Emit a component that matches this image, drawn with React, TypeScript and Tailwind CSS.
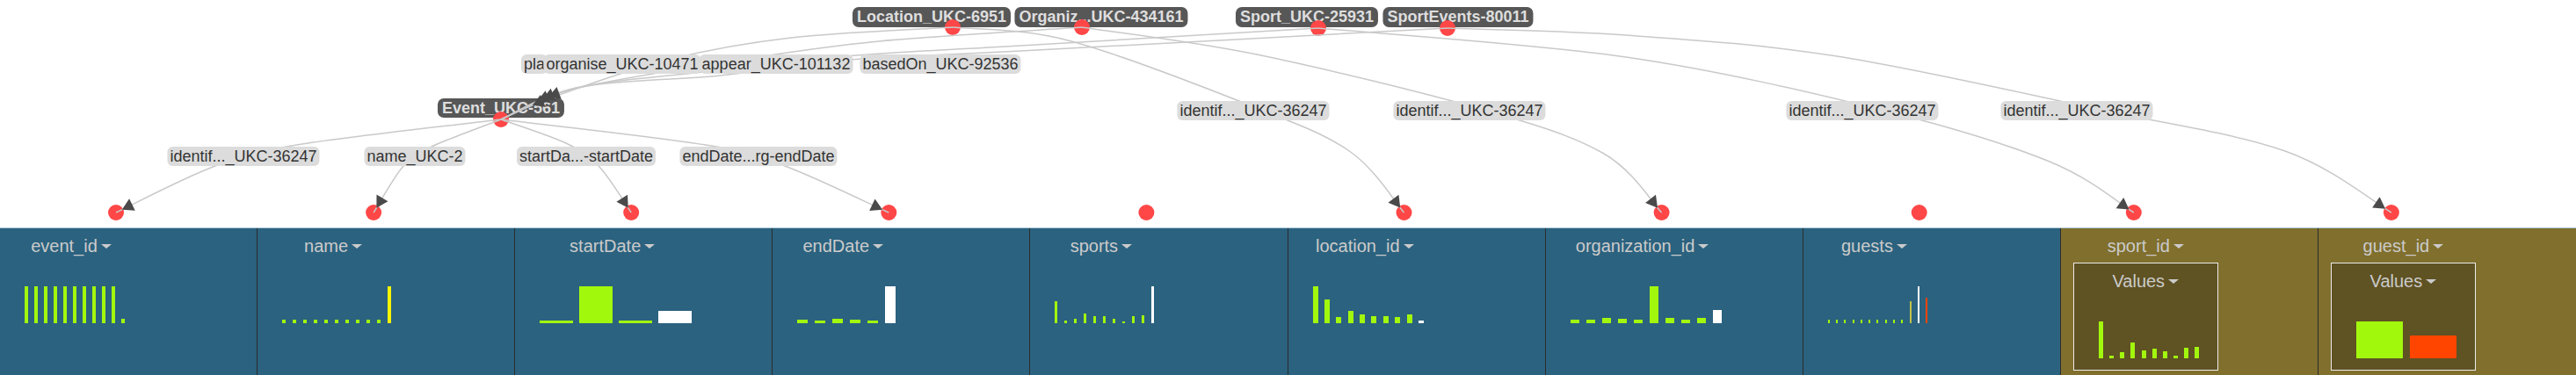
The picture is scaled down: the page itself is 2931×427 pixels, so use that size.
type Pt = [number, number];
type Bar = [number, string?];
type Chart = { w: number; gap: number; bars: Bar[] };
type Col = { name: string; chart: Chart; box?: boolean };

const GREEN = "#a2f80d";
const WHITE = "#ffffff";
const YELLOW = "#f6f600";
const RED = "#ff4500";
const KHAKI = "#c4c24a";

const g = (...hs: number[]): Bar[] => hs.map((h) => [h] as Bar);

const columns: Col[] = [
  { name: "event_id", chart: { w: 4, gap: 7, bars: g(42, 42, 42, 42, 42, 42, 42, 42, 42, 42, 5) } },
  { name: "name", chart: { w: 4, gap: 8, bars: [...g(4, 4, 4, 4, 4, 4, 4, 4, 4, 4), [42, YELLOW]] } },
  { name: "startDate", chart: { w: 38, gap: 7, bars: [...g(3, 42, 3), [14, WHITE]] } },
  { name: "endDate", chart: { w: 12, gap: 8, bars: [...g(4, 3, 5, 4, 3), [42, WHITE]] } },
  { name: "sports", chart: { w: 3, gap: 8, bars: [...g(25, 3, 5, 11, 8, 8, 5, 2, 8, 9), [42, WHITE]] } },
  { name: "location_id", chart: { w: 6, gap: 7.4, bars: [...g(42, 27, 7, 14, 10, 8, 8, 7, 10), [3, WHITE]] } },
  { name: "organization_id", chart: { w: 10, gap: 8, bars: [...g(4, 4, 6, 5, 4, 42, 6, 4, 6), [15, WHITE]] } },
  {
    name: "guests",
    chart: { w: 2, gap: 7.3, bars: [...g(4, 4, 4, 4, 4, 4, 4, 4, 4, 4), [25, KHAKI], [42, WHITE], [29, RED]] },
  },
  { name: "sport_id", box: true, chart: { w: 5, gap: 7.2, bars: g(42, 3, 7, 18, 9, 11, 8, 3, 12, 13) } },
  { name: "guest_id", box: true, chart: { w: 53, gap: 8, bars: [[42], [26, RED]] } },
];

// graph ------------------------------------------------------------------

const COL_W = 2931 / 10;
const bottomDots: Pt[] = columns.map((c, i) => [i * COL_W + (c.box ? 83 : 132), 242]);
const EVENT: Pt = [570, 136];
const LOC: Pt = [1084, 31];
const ORG: Pt = [1231, 31];
const SPORT: Pt = [1500, 32];
const SEVENTS: Pt = [1647, 32];

const edges: { pts: Pt[]; back: number }[] = [
  // into Event
  { pts: [LOC, [900, 43], [760, 68], [631, 110], EVENT], back: 38 },
  { pts: [ORG, [1000, 47], [830, 70], [650, 102], EVENT], back: 45 },
  { pts: [SPORT, [1161, 52], [975, 63], [800, 82], [655, 100], EVENT], back: 52 },
  { pts: [SEVENTS, [1161, 58], [967, 68], [820, 86], [662, 99], EVENT], back: 59 },
  // out of Event
  { pts: [EVENT, [344, 164], [245, 189], bottomDots[0]], back: 6 },
  { pts: [EVENT, [491, 167], [459, 189], bottomDots[1]], back: 6 },
  { pts: [EVENT, [644, 163], [682, 190], bottomDots[2]], back: 6 },
  { pts: [EVENT, [803, 165], [893, 189], bottomDots[3]], back: 6 },
  // top nodes to their id columns
  { pts: [LOC, [1219, 47], [1435, 125], [1538, 174], bottomDots[5]], back: 6 },
  { pts: [ORG, [1430, 62], [1688, 125], [1825, 175], bottomDots[6]], back: 6 },
  { pts: [SPORT, [1850, 65], [2140, 125], [2332, 184], bottomDots[8]], back: 6 },
  { pts: [SEVENTS, [1850, 40], [2090, 64], [2390, 125], [2600, 172], bottomDots[9]], back: 6 },
];

const nodes = [
  { text: "Location_UKC-6951", cls: "left-[1060px] top-[8px] h-[23px] leading-[23px]" },
  { text: "Organiz...UKC-434161", cls: "left-[1253px] top-[8px] h-[23px] leading-[23px]" },
  { text: "Sport_UKC-25931", cls: "left-[1487px] top-[8px] h-[23px] leading-[23px]" },
  { text: "SportEvents-80011", cls: "left-[1659px] top-[8px] h-[23px] leading-[23px]" },
  { text: "Event_UKC-561", cls: "left-[570px] top-[112px] h-[22px] leading-[22px]" },
];

const labels = [
  { text: "pla", cls: "left-[593px] top-[62px]" },
  { text: "organise_UKC-10471", cls: "left-[708px] top-[62px] -translate-x-1/2" },
  { text: "appear_UKC-101132", cls: "left-[883px] top-[62px] -translate-x-1/2" },
  { text: "basedOn_UKC-92536", cls: "left-[1070px] top-[62px] -translate-x-1/2" },
  { text: "identif..._UKC-36247", cls: "left-[277px] top-[167px] -translate-x-1/2" },
  { text: "name_UKC-2", cls: "left-[472px] top-[167px] -translate-x-1/2" },
  { text: "startDa...-startDate", cls: "left-[667px] top-[167px] -translate-x-1/2" },
  { text: "endDate...rg-endDate", cls: "left-[863px] top-[167px] -translate-x-1/2" },
  { text: "identif..._UKC-36247", cls: "left-[1426px] top-[115px] -translate-x-1/2" },
  { text: "identif..._UKC-36247", cls: "left-[1672px] top-[115px] -translate-x-1/2" },
  { text: "identif..._UKC-36247", cls: "left-[2119px] top-[115px] -translate-x-1/2" },
  { text: "identif..._UKC-36247", cls: "left-[2363px] top-[115px] -translate-x-1/2" },
];

type Seg = [Pt, Pt, Pt, Pt];

// catmull-rom through the waypoints, as cubic pieces
function segs(pts: Pt[]): Seg[] {
  const out: Seg[] = [];
  for (let i = 0; i < pts.length - 1; i++) {
    const a = pts[i - 1] ?? pts[i];
    const b = pts[i];
    const c = pts[i + 1];
    const d = pts[i + 2] ?? pts[i + 1];
    out.push([
      b,
      [b[0] + (c[0] - a[0]) / 6, b[1] + (c[1] - a[1]) / 6],
      [c[0] - (d[0] - b[0]) / 6, c[1] - (d[1] - b[1]) / 6],
      c,
    ]);
  }
  return out;
}

function pathD(pts: Pt[]) {
  return segs(pts).reduce(
    (s, [, c1, c2, p]) => `${s} C${c1[0]},${c1[1]} ${c2[0]},${c2[1]} ${p[0]},${p[1]}`,
    `M${pts[0][0]},${pts[0][1]}`
  );
}

function bez([p0, c1, c2, p1]: Seg, t: number): Pt {
  const u = 1 - t;
  const f = (i: 0 | 1) => u * u * u * p0[i] + 3 * u * u * t * c1[i] + 3 * u * t * t * c2[i] + t * t * t * p1[i];
  return [f(0), f(1)];
}

function arrow(pts: Pt[], back: number) {
  const samples: Pt[] = [];
  segs(pts).forEach((s) => {
    for (let i = 0; i <= 40; i++) samples.push(bez(s, i / 40));
  });
  const end = pts[pts.length - 1];
  let k = samples.length - 1;
  while (k > 4 && Math.hypot(samples[k][0] - end[0], samples[k][1] - end[1]) < back) k--;
  const tip = samples[k];
  const prev = samples[k - 4];
  const len = Math.hypot(tip[0] - prev[0], tip[1] - prev[1]) || 1;
  const ux = (tip[0] - prev[0]) / len;
  const uy = (tip[1] - prev[1]) / len;
  const bx = tip[0] - ux * 13;
  const by = tip[1] - uy * 13;
  return `${tip[0]},${tip[1]} ${bx - uy * 7.5},${by + ux * 7.5} ${bx + uy * 7.5},${by - ux * 7.5}`;
}

function Graph() {
  const dots: Pt[] = [LOC, ORG, SPORT, SEVENTS, EVENT, ...bottomDots];
  return (
    <div className="relative h-[259px] overflow-hidden">
      {nodes.map((n) => (
        <div
          key={n.text}
          className={`absolute -translate-x-1/2 whitespace-nowrap rounded-[7px] bg-[#575757] px-[5px] text-[18px] font-bold text-[#dedede] ${n.cls}`}
        >
          {n.text}
        </div>
      ))}

      <svg className="absolute left-0 top-0" width={2931} height={259}>
        {dots.map(([x, y], i) => (
          <circle key={i} cx={x} cy={y} r={9} fill="#ff4747" />
        ))}
        {edges.map((e, i) => (
          <path key={i} d={pathD(e.pts)} fill="none" stroke="#c9c9c9" strokeWidth={1.5} />
        ))}
        {edges.map((e, i) => (
          <polygon key={i} points={arrow(e.pts, e.back)} fill="#4a4a4a" />
        ))}
      </svg>

      {labels.map((l, i) => (
        <div
          key={i}
          className={`absolute h-[22px] whitespace-nowrap rounded-[6px] bg-[#dcdcdc] px-[3px] text-[18px] leading-[22px] text-[#333] ${l.cls}`}
        >
          {l.text}
        </div>
      ))}
    </div>
  );
}

// panel ------------------------------------------------------------------

function Heading({ label, className = "" }: { label: string; className?: string }) {
  return (
    <div
      className={`flex h-[24px] items-center justify-center gap-[4px] text-[20px] leading-[24px] text-[#cbcbcb] ${className}`}
    >
      <span>{label}</span>
      <span className="h-0 w-0 border-x-[6px] border-t-[5px] border-x-transparent border-t-[#cbcbcb]" />
    </div>
  );
}

function Bars({ chart }: { chart: Chart }) {
  return (
    <div className="flex h-[42px] items-end" style={{ gap: chart.gap }}>
      {chart.bars.map(([h, c], i) => (
        <div key={i} className="shrink-0" style={{ width: chart.w, height: h, background: c ?? GREEN }} />
      ))}
    </div>
  );
}

function Column({ col, last }: { col: Col; last: boolean }) {
  const edge = last ? "" : "border-r border-[#2c2c2c]";

  if (col.box) {
    return (
      <div className={`bg-[#806f2d] pl-[14px] pt-[8px] ${edge}`}>
        <div className="w-[165px]">
          <Heading label={col.name} />
          <div className="mt-[7px] h-[123px] border border-[#ececec] bg-[#5f5223] pt-[8px]">
            <Heading label="Values" />
            <div className="mt-[34px] pl-[28px]">
              <Bars chart={col.chart} />
            </div>
          </div>
        </div>
      </div>
    );
  }

  return (
    <div className={`bg-[#2b627f] pl-[28px] pt-[8px] ${edge}`}>
      <div className="inline-flex flex-col">
        <Heading label={col.name} className="pr-[8px]" />
        <div className="mt-[34px]">
          <Bars chart={col.chart} />
        </div>
      </div>
    </div>
  );
}

export default function App() {
  return (
    <div className="w-[2931px] bg-white font-['Liberation_Sans',Arial,sans-serif]">
      <Graph />
      <div className="grid h-[168px] grid-cols-10 border-t border-[#a9c6d6]">
        {columns.map((c, i) => (
          <Column key={c.name} col={c} last={i === columns.length - 1} />
        ))}
      </div>
    </div>
  );
}
